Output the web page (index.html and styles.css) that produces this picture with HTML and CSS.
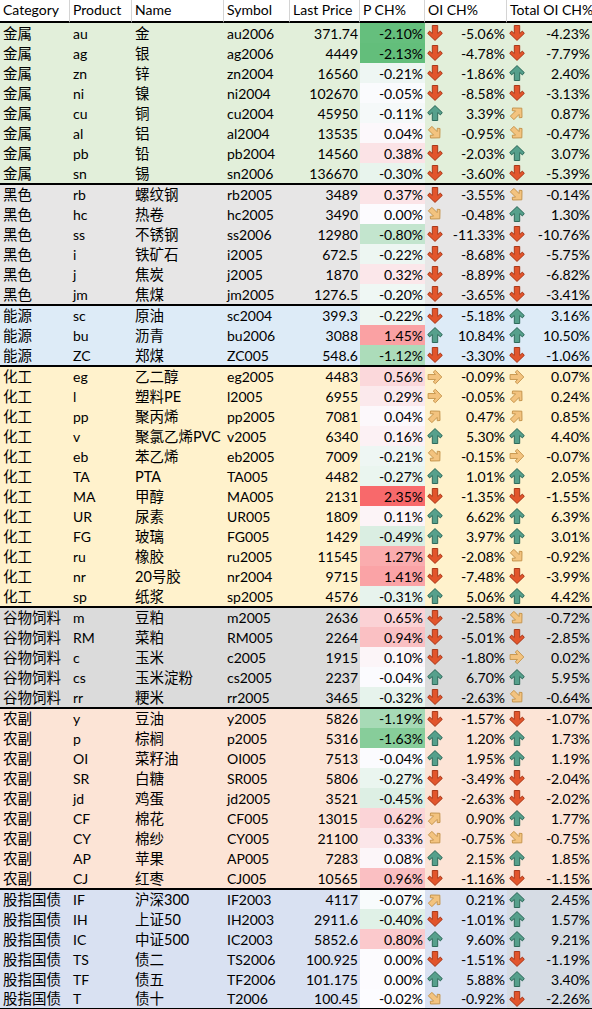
FILE: index.html
```html
<!DOCTYPE html>
<html lang="zh">
<head>
  <meta charset="UTF-8">
  <title>Futures OI</title>
  <link rel="stylesheet" href="styles.css">
</head>
<body>
  <svg class="defs" width="0" height="0">
    <defs>
      <polygon id="arrow-shape" points="8,0.6 15.3,7.6 13.4,9.9 10.7,7.5 10.7,15.5 5.3,15.5 5.3,7.5 2.6,9.9 0.7,7.6"/>
    </defs>
  </svg>

  <table class="sheet">
    <colgroup>
      <col style="width:70px"><col style="width:62px"><col style="width:92px"><col style="width:66px">
      <col style="width:70px"><col style="width:65px"><col style="width:82px"><col style="width:85px">
    </colgroup>
    <thead>
      <tr>
        <th>Category</th>
        <th>Product</th>
        <th>Name</th>
        <th>Symbol</th>
        <th>Last Price</th>
        <th>P CH%</th>
        <th>OI CH%</th>
        <th class="last">Total OI CH%</th>
      </tr>
    </thead>
    <tbody id="rows"></tbody>
  </table>

  <script>
const sections = [
  { name: '金属', cls: 'metal', rows: [
    ['au', '金', 'au2006', '371.74', -2.10, -5.06, -4.23],
    ['ag', '银', 'ag2006', '4449', -2.13, -4.78, -7.79],
    ['zn', '锌', 'zn2004', '16560', -0.21, -1.86, 2.40],
    ['ni', '镍', 'ni2004', '102670', -0.05, -8.58, -3.13],
    ['cu', '铜', 'cu2004', '45950', -0.11, 3.39, 0.87],
    ['al', '铝', 'al2004', '13535', 0.04, -0.95, -0.47],
    ['pb', '铅', 'pb2004', '14560', 0.38, -2.03, 3.07],
    ['sn', '锡', 'sn2006', '136670', -0.30, -3.60, -5.39],
  ]},
  { name: '黑色', cls: 'black', rows: [
    ['rb', '螺纹钢', 'rb2005', '3489', 0.37, -3.55, -0.14],
    ['hc', '热卷', 'hc2005', '3490', 0.00, -0.48, 1.30],
    ['ss', '不锈钢', 'ss2006', '12980', -0.80, -11.33, -10.76],
    ['i', '铁矿石', 'i2005', '672.5', -0.22, -8.68, -5.75],
    ['j', '焦炭', 'j2005', '1870', 0.32, -8.89, -6.82],
    ['jm', '焦煤', 'jm2005', '1276.5', -0.20, -3.65, -3.41],
  ]},
  { name: '能源', cls: 'energy', rows: [
    ['sc', '原油', 'sc2004', '399.3', -0.22, -5.18, 3.16],
    ['bu', '沥青', 'bu2006', '3088', 1.45, 10.84, 10.50],
    ['ZC', '郑煤', 'ZC005', '548.6', -1.12, -3.30, -1.06],
  ]},
  { name: '化工', cls: 'chem', rows: [
    ['eg', '乙二醇', 'eg2005', '4483', 0.56, -0.09, 0.07],
    ['l', '塑料PE', 'l2005', '6955', 0.29, -0.05, 0.24],
    ['pp', '聚丙烯', 'pp2005', '7081', 0.04, 0.47, 0.85],
    ['v', '聚氯乙烯PVC', 'v2005', '6340', 0.16, 5.30, 4.40],
    ['eb', '苯乙烯', 'eb2005', '7009', -0.21, -0.15, -0.07],
    ['TA', 'PTA', 'TA005', '4482', -0.27, 1.01, 2.05],
    ['MA', '甲醇', 'MA005', '2131', 2.35, -1.35, -1.55],
    ['UR', '尿素', 'UR005', '1809', 0.11, 6.62, 6.39],
    ['FG', '玻璃', 'FG005', '1429', -0.49, 3.97, 3.01],
    ['ru', '橡胶', 'ru2005', '11545', 1.27, -2.08, -0.92],
    ['nr', '20号胶', 'nr2004', '9715', 1.41, -7.48, -3.99],
    ['sp', '纸浆', 'sp2005', '4576', -0.31, 5.06, 4.42],
  ]},
  { name: '谷物饲料', cls: 'grain', rows: [
    ['m', '豆粕', 'm2005', '2636', 0.65, -2.58, -0.72],
    ['RM', '菜粕', 'RM005', '2264', 0.94, -5.01, -2.85],
    ['c', '玉米', 'c2005', '1915', 0.10, -1.80, 0.02],
    ['cs', '玉米淀粉', 'cs2005', '2237', -0.04, 6.70, 5.95],
    ['rr', '粳米', 'rr2005', '3465', -0.32, -2.63, -0.64],
  ]},
  { name: '农副', cls: 'farm', rows: [
    ['y', '豆油', 'y2005', '5826', -1.19, -1.57, -1.07],
    ['p', '棕榈', 'p2005', '5316', -1.63, 1.20, 1.73],
    ['OI', '菜籽油', 'OI005', '7513', -0.04, 1.95, 1.19],
    ['SR', '白糖', 'SR005', '5806', -0.27, -3.49, -2.04],
    ['jd', '鸡蛋', 'jd2005', '3521', -0.45, -2.63, -2.02],
    ['CF', '棉花', 'CF005', '13015', 0.62, 0.90, 1.77],
    ['CY', '棉纱', 'CY005', '21100', 0.33, -0.75, -0.75],
    ['AP', '苹果', 'AP005', '7283', 0.08, 2.15, 1.85],
    ['CJ', '红枣', 'CJ005', '10565', 0.96, -1.16, -1.15],
  ]},
  { name: '股指国债', cls: 'index', rows: [
    ['IF', '沪深300', 'IF2003', '4117', -0.07, 0.21, 2.45],
    ['IH', '上证50', 'IH2003', '2911.6', -0.40, -1.01, 1.57],
    ['IC', '中证500', 'IC2003', '5852.6', 0.80, 9.60, 9.21],
    ['TS', '债二', 'TS2006', '100.925', 0.00, -1.51, -1.19],
    ['TF', '债五', 'TF2006', '101.175', 0.00, 5.88, 3.40],
    ['T', '债十', 'T2006', '100.45', -0.02, -0.92, -2.26],
  ]},
];

// colour scale for P CH%: green (min) - white (median) - red (max)
const all = sections.flatMap((s) => s.rows.map((r) => r[4]));
const sorted = [...all].sort((a, b) => a - b);
const lo = sorted[0];
const hi = sorted[sorted.length - 1];
const mid = sorted[Math.floor(sorted.length / 2)];
const white = [252, 252, 255];
const green = [99, 190, 123];
const red = [248, 105, 107];

function scaleColor(v) {
  let t, end;
  if (v <= mid) { t = (mid - v) / (mid - lo); end = green; }
  else { t = (v - mid) / (hi - mid); end = red; }
  const c = white.map((w, i) => Math.round(w + (end[i] - w) * t));
  return `rgb(${c.join(',')})`;
}

function arrowKind(v) {
  if (v <= -1) return 'down';
  if (v < -0.1) return 'downright';
  if (v <= 0.1) return 'right';
  if (v < 1) return 'upright';
  return 'up';
}

function arrowIcon(v) {
  const kind = arrowKind(v);
  return `<svg class="arrow ${kind}" viewBox="0 0 16 16" width="16" height="16"><use href="#arrow-shape"/></svg>`;
}

function pct(v) {
  return v.toFixed(2) + '%';
}

const tbody = document.getElementById('rows');

sections.forEach((section, s) => {
  section.rows.forEach((r, i) => {
    const row = document.createElement('tr');
    row.className = section.cls + (i === 0 && s > 0 ? ' first' : '');
    row.innerHTML = `
      <td class="zh">${section.name}</td>
      <td>${r[0]}</td>
      <td class="zh">${r[1]}</td>
      <td>${r[2]}</td>
      <td class="num">${r[3]}</td>
      <td class="num" style="background:${scaleColor(r[4])}">${pct(r[4])}</td>
      <td class="num"><span class="cell">${arrowIcon(r[5])}<span>${pct(r[5])}</span></span></td>
      <td class="num total"><span class="cell">${arrowIcon(r[6])}<span>${pct(r[6])}</span></span></td>
    `;
    tbody.appendChild(row);
  });
});
  </script>
</body>
</html>
```

FILE: styles.css
```css
body {
  margin: 0;
  padding: 0;
  background: #ffffff;
  font-family: Lato, "Noto Sans CJK SC", sans-serif;
  font-size: 14px;
  color: #000000;
}

.defs {
  position: absolute;
  width: 0;
  height: 0;
}

.sheet {
  width: 592px;
  table-layout: fixed;
  border-collapse: separate;
  border-spacing: 0;
  border-right: 2px solid #000;
  border-bottom: 2px solid #000;
}

th, td {
  box-sizing: border-box;
  height: 20px;
  padding: 0 2px 0 3px;
  white-space: nowrap;
  overflow: hidden;
  line-height: 19px;
}

td.zh {
  font-size: 14.5px;
}

th {
  font-weight: normal;
  text-align: left;
  height: 22px;
  padding-bottom: 2px;
  border-bottom: 2px solid #000;
  border-right: 1px solid #d4d4d4;
}

th.last {
  border-right: none;
  padding-right: 0;
}

tr.first td {
  height: 21px;
  border-top: 2px solid #000;
}

tbody tr:last-child td {
  height: 19px;
}

.num {
  text-align: right;
}

.cell {
  display: flex;
  align-items: center;
  justify-content: space-between;
}

.arrow {
  display: block;
  flex: none;
  margin-left: -1px;
}

.arrow use {
  stroke-width: 1;
  stroke-linejoin: round;
  transform-origin: 8px 8px;
}

.arrow.up use {
  fill: #56a08c;
  stroke: #2f6a5b;
}

.arrow.down use {
  fill: #e2552c;
  stroke: #a9391a;
  transform: rotate(180deg);
}

.arrow.upright use,
.arrow.right use,
.arrow.downright use {
  fill: #f3c37f;
  stroke: #c4944c;
}

.arrow.upright use {
  transform: rotate(45deg) scale(0.92);
}

.arrow.right use {
  transform: rotate(90deg) scale(0.92);
}

.arrow.downright use {
  transform: rotate(135deg) scale(0.92);
}

.metal td { background: #e2efda; }
.black td { background: #e7e6e6; }
.energy td { background: #ddebf7; }
.chem td { background: #fff2cc; }
.grain td { background: #dbdbdb; }
.farm td { background: #fce4d6; }
.index td { background: #d9e1f2; }
.index td.total { background: #d6dce4; }
```
